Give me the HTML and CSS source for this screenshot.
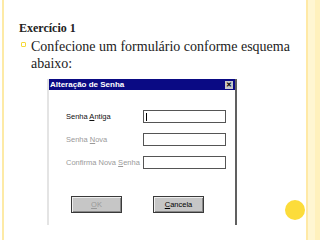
FILE: index.html
```html
<!DOCTYPE html>
<html lang="pt">

<head>
    <meta charset="UTF-8">
    <title>Exercício 1</title>
    <link rel="stylesheet" href="styles.css">
</head>

<body>
    <div class="slide">
        <div class="content">
            <h1 class="title">Exercício 1</h1>
            <div class="item">
                <span class="bullet"></span>
                <p>Confecione um formulário conforme esquema abaixo:</p>
            </div>

            <!-- janela de exemplo -->
            <div class="dialog">
                <div class="titlebar">
                    <span>Alteração de Senha</span>
                    <span class="close">&#x2715;</span>
                </div>
                <div class="dialog-body">
                    <div class="row">
                        <label>Senha <u>A</u>ntiga</label>
                        <div class="field"><span class="caret"></span></div>
                    </div>
                    <div class="row disabled">
                        <label>Senha <u>N</u>ova</label>
                        <div class="field"></div>
                    </div>
                    <div class="row disabled">
                        <label>Confirma Nova <u>S</u>enha</label>
                        <div class="field"></div>
                    </div>
                    <div class="buttons">
                        <div class="btn off"><u>O</u>K</div>
                        <div class="btn"><u>C</u>ancela</div>
                    </div>
                </div>
            </div>
        </div>
        <div class="dot"></div>
    </div>
</body>

</html>
```

FILE: styles.css
```css
body {
    margin: 0;
}

.slide {
    position: relative;
    width: 320px;
    height: 240px;
    overflow: hidden;
    background:
        linear-gradient(to right, #ffe9a6 0, #ffe9a6 2px, #fff6d2 2px, #fff6d2 9px, #fff1bd 9px) 306px 0 / 14px 100% no-repeat,
        linear-gradient(to right, #fff 0, #fff 2px, #fdeaa6 2px, #fdeaa6 4px, #fff 4px) 0 0 / 6px 100% no-repeat,
        #fff;
}

.content {
    padding: 21px 0 0 19px;
}

.title {
    margin: 0;
    font-family: 'Liberation Serif', serif;
    font-size: 12px;
    line-height: 14px;
    font-weight: bold;
    color: #222;
}

.item {
    display: flex;
    margin-top: 3px;
}

.bullet {
    flex: none;
    width: 3px;
    height: 3px;
    margin: 4px 5px 0 2px;
    border: 1px solid #f5d93a;
    border-radius: 1px;
}

.item p {
    margin: 0;
    width: 272px;
    font-family: 'Liberation Serif', serif;
    font-size: 14px;
    line-height: 17px;
    color: #222;
}

.dialog {
    width: 186px;
    margin: 7px 0 0 28px;
    border-left: 2px solid #e4e4e4;
    border-right: 2px solid #606060;
    font-family: 'Liberation Sans', Arial, sans-serif;
}

.titlebar {
    display: flex;
    justify-content: space-between;
    align-items: center;
    height: 11px;
    padding: 0 2px 0 1px;
    background-color: #0a0a84;
    color: #fff;
    font-size: 8px;
    font-weight: bold;
}

.close {
    width: 8px;
    height: 8px;
    background-color: #c8c8c8;
    color: #000;
    font-size: 7px;
    line-height: 8px;
    text-align: center;
}

.dialog-body {
    padding: 20px 0 12px 17px;
    background-color: #fff;
}

.row {
    display: flex;
    align-items: center;
    height: 13px;
    margin-bottom: 10px;
}

.row label {
    width: 77px;
    font-size: 7.5px;
    color: #111;
}

.row.disabled label {
    color: #9a9a9a;
}

.field {
    display: flex;
    align-items: center;
    width: 81px;
    height: 11px;
    border: 1px solid #555;
    background-color: #fff;
}

.caret {
    width: 1px;
    height: 8px;
    margin-left: 2px;
    background-color: #000;
}

.buttons {
    display: flex;
    gap: 31px;
    margin: 27px 0 0 5px;
}

.btn {
    width: 49px;
    height: 15px;
    border: 1px solid #3a3a3a;
    background-color: #c6c6c6;
    box-shadow: inset 1px 1px 0 #efefef, inset -1px -1px 0 #888;
    font-size: 7.5px;
    line-height: 15px;
    text-align: center;
    color: #000;
}

.btn.off {
    color: #999;
}

.dot {
    position: absolute;
    left: 285px;
    top: 200px;
    width: 20px;
    height: 20px;
    border-radius: 50%;
    background-color: #fcdc3a;
}
```
